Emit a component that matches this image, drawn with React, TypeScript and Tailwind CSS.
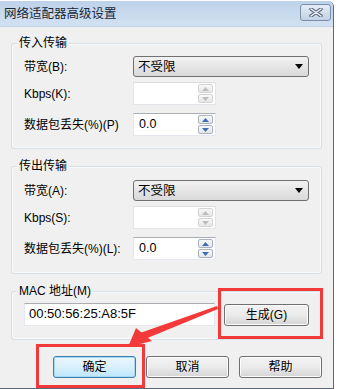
import React from 'react';

const font = { fontFamily: '"Liberation Sans", "Noto Sans CJK SC", sans-serif' };

const Spinner: React.FC<{ disabled?: boolean }> = ({ disabled }) => {
  const border = disabled ? 'border-[#d4d4d4]' : 'border-[#a9b3bf]';
  const fill = disabled ? '#bdbdbd' : '#3d6fb6';
  return (
    <div className="flex flex-col w-[15px] my-[1px] mr-[2px] gap-[1px]">
      <div className={`flex-1 border ${border} rounded-[2px] bg-gradient-to-b from-[#f8f8f8] to-[#e6e6e6] flex items-center justify-center`}>
        <svg width="7" height="4" viewBox="0 0 7 4"><polygon points="0,4 7,4 3.5,0" fill={fill} /></svg>
      </div>
      <div className={`flex-1 border ${border} rounded-[2px] bg-gradient-to-b from-[#f8f8f8] to-[#e6e6e6] flex items-center justify-center`}>
        <svg width="7" height="4" viewBox="0 0 7 4"><polygon points="0,0 7,0 3.5,4" fill={fill} /></svg>
      </div>
    </div>
  );
};

const NumberBox: React.FC<{ value?: string; disabled?: boolean }> = ({ value, disabled }) => (
  <div
    className={`flex w-[83px] h-[23px] bg-white border ${
      disabled ? 'border-[#e2e6ea] border-t-[#d9dde2]' : 'border-[#e3e9ef] border-t-[#abadb3]'
    }`}
  >
    <div className="flex-1 pl-[5px] text-[12.5px] leading-[20px] text-black">{value}</div>
    <Spinner disabled={disabled} />
  </div>
);

const Select: React.FC<{ value: string }> = ({ value }) => (
  <div className="flex items-center w-[176px] h-[21px] border border-[#707070] rounded-[3px] bg-gradient-to-b from-[#f2f2f2] to-[#d9d9d9] pl-[4px] pr-[5px]">
    <span className="flex-1 text-[12.5px] leading-[18px] text-black">{value}</span>
    <svg width="8" height="5" viewBox="0 0 8 5"><polygon points="0,0 8,0 4,5" fill="#000" /></svg>
  </div>
);

const Row: React.FC<{ label: string; children: React.ReactNode; className?: string }> = ({ label, children, className }) => (
  <div className={`flex items-center ${className ?? ''}`}>
    <div className="w-[109px] text-[12px] text-black">{label}</div>
    {children}
  </div>
);

const Group: React.FC<{ title: string; className: string; children: React.ReactNode }> = ({ title, className, children }) => (
  <div className={`relative border border-[#d5dfe5] rounded-[3px] shadow-[inset_0_0_0_1px_#fafafa] ${className}`}>
    <span className="absolute left-[5px] top-[-9px] px-[2px] bg-[#f0f0f0] text-[12px] leading-[16px] text-black">{title}</span>
    {children}
  </div>
);

const Button: React.FC<{ label: string; primary?: boolean; className?: string }> = ({ label, primary, className }) => (
  <div
    className={`w-[85px] h-[22px] rounded-[3px] border flex items-center justify-center text-[12px] text-black ${
      primary
        ? 'border-[#3c7fb1] bg-gradient-to-b from-[#eaf6fd] via-[#d9f0fc] to-[#bee6fd] shadow-[inset_0_0_0_1px_#a7d8f5]'
        : 'border-[#707070] bg-gradient-to-b from-[#f2f2f2] via-[#ebebeb] to-[#d4d4d4] shadow-[inset_0_0_0_1px_#fcfcfc]'
    } ${className ?? ''}`}
  >
    {label}
  </div>
);

export default function App() {
  return (
    <div className="relative w-[338px] h-[389px] bg-white flex overflow-hidden" style={font}>
      <div className="w-[334px] h-[388px] mt-[1px] flex flex-col border-r border-b border-[#5b6878] rounded-tr-[6px] overflow-hidden bg-[#f0f0f0]">
        {/* title bar */}
        <div className="h-[26px] flex items-center pl-[4px] pr-[2px] bg-gradient-to-b from-[#bdd1e9] to-[#d3e2f2] border-b border-[#c4d3e3]">
          <span className="flex-1 text-[12.5px] text-[#1a2735] pt-[2px]">网络适配器高级设置</span>
          <div className="w-[31px] h-[17px] mt-[-2px] rounded-[3px] border border-[#7d8fa6] bg-gradient-to-b from-[#e4ecf6] to-[#c3d2e4] flex items-center justify-center">
            <svg width="14" height="9" viewBox="0 0 14 9">
              <path d="M2 1 L12 8 M12 1 L2 8" stroke="#56657a" strokeWidth="3.4" strokeLinecap="round" />
              <path d="M2 1 L12 8 M12 1 L2 8" stroke="#f4f6f8" strokeWidth="1.5" strokeLinecap="round" />
            </svg>
          </div>
        </div>

        {/* body */}
        <div className="flex-1 flex flex-col px-[11px]">
          <Group title="传入传输" className="mt-[16px] h-[106px] pt-[12px] pl-[12px]">
            <Row label="带宽(B):">
              <Select value="不受限" />
            </Row>
            <Row label="Kbps(K):" className="mt-[5px]">
              <NumberBox disabled />
            </Row>
            <Row label="数据包丢失(%)(P)" className="mt-[8px]">
              <NumberBox value="0.0" />
            </Row>
          </Group>

          <Group title="传出传输" className="mt-[17px] h-[108px] pt-[13px] pl-[12px]">
            <Row label="带宽(A):">
              <Select value="不受限" />
            </Row>
            <Row label="Kbps(S):" className="mt-[5px]">
              <NumberBox disabled />
            </Row>
            <Row label="数据包丢失(%)(L):" className="mt-[8px]">
              <NumberBox value="0.0" />
            </Row>
          </Group>

          <Group title="MAC 地址(M)" className="mt-[17px] h-[49px] pt-[11px] pl-[12px]">
            <div className="flex items-start">
              <div className="w-[191px] h-[23px] bg-white border border-[#e3e9ef] border-t-[#abadb3] pl-[4px] text-[13px] leading-[20px] text-black">
                00:50:56:25:A8:5F
              </div>
              <Button label="生成(G)" className="ml-[9px] mt-[1px]" />
            </div>
          </Group>

          <div className="flex mt-[16px] pl-[42px] gap-[10px]">
            <Button label="确定" primary />
            <Button label="取消" />
            <Button label="帮助" />
          </div>
        </div>
      </div>

      {/* annotation overlay */}
      <div className="absolute left-[218px] top-[288px] w-[105px] h-[51px] border-[3px] border-[#f23a3a]" />
      <div className="absolute left-[36px] top-[344px] w-[109px] h-[44px] border-[3px] border-[#f23a3a]" />
      <svg className="absolute left-0 top-0 pointer-events-none" width="338" height="389" viewBox="0 0 338 389">
        <polygon points="217,306 218,309 145,339 140,333" fill="#f23a3a" />
        <polygon points="128,347 136,328 152,341" fill="#f23a3a" />
      </svg>
    </div>
  );
}
